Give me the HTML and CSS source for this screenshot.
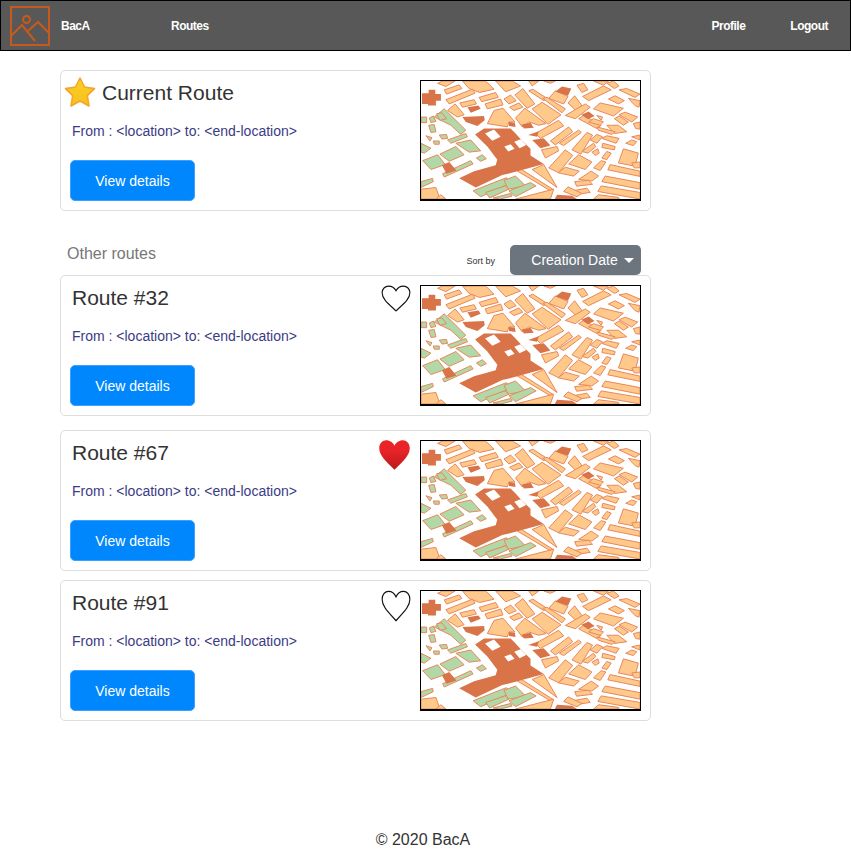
FILE: index.html
```html
<!DOCTYPE html>
<html>
  <head>
    <title>BacA Routes</title>
    <link rel="stylesheet" href="styles.css">
  </head>
  <body>
    <!-- Shared drawings: the map picture and the heart, reused on every card. -->
    <svg class="defs" width="0" height="0">
      <defs>
        <linearGradient id="heart_red" x1="0" y1="0" x2="0" y2="1">
          <stop offset="0.35" stop-color="#e82428"/>
          <stop offset="1" stop-color="#bb181c"/>
        </linearGradient>
        <linearGradient id="star_yellow" x1="0" y1="0" x2="0" y2="1">
          <stop offset="0" stop-color="#fbd023"/>
          <stop offset="1" stop-color="#f6c01f"/>
        </linearGradient>
      </defs>
      <symbol id="heart" viewBox="0 0 32 28" preserveAspectRatio="none">
        <path d="M16 26.8C8 19.5 1.2 14.5 1.2 8C1.2 4 4.3 1.2 8 1.2C11.5 1.2 14.5 3.2 16 6C17.5 3.2 20.5 1.2 24 1.2C27.7 1.2 30.8 4 30.8 8C30.8 14.5 24 19.5 16 26.8Z"/>
      </symbol>
      <symbol id="map" viewBox="15 15 660 360" preserveAspectRatio="none">
        <g class="map_tan">
          <polygon points="65,22 80,15 118,15 90,32"/>
          <polygon points="85,42 130,27 138,38 92,55"/>
          <polygon points="140,15 210,15 235,40 192,50 160,38"/>
          <polygon points="240,15 290,15 315,30 270,48"/>
          <polygon points="340,15 370,15 350,30"/>
          <polygon points="385,15 420,15 405,22"/>
          <polygon points="90,72 170,40 178,52 100,85"/>
          <polygon points="190,65 240,50 248,65 198,78"/>
          <polygon points="208,85 255,70 262,88 215,100"/>
          <polygon points="132,82 175,72 182,85 140,95"/>
          <polygon points="95,105 118,85 145,118 125,125"/>
          <polygon points="265,70 285,58 302,75 280,85"/>
          <polygon points="282,95 310,82 322,95 295,105"/>
          <polygon points="298,58 322,38 358,85 335,98"/>
          <polygon points="340,45 352,40 395,68 385,75"/>
          <polygon points="382,68 395,65 450,100 440,112"/>
          <polygon points="350,100 380,80 437,118 398,147"/>
          <polygon points="300,128 328,98 392,145 370,150 340,140 320,155"/>
          <polygon points="215,145 235,105 262,98 298,140 280,140 275,155"/>
          <polygon points="360,175 430,135 445,152 375,190"/>
          <polygon points="405,198 460,155 472,170 420,210"/>
          <polygon points="432,205 490,165 498,172 445,212"/>
          <polygon points="470,225 515,172 532,180 497,238"/>
          <polygon points="378,225 425,215 430,228 390,250"/>
          <polygon points="400,280 450,225 472,242 430,295"/>
          <polygon points="460,268 490,240 530,262 510,285"/>
          <polygon points="428,295 450,278 492,290 475,305"/>
          <polygon points="500,230 535,205 542,215 518,235"/>
          <polygon points="525,195 545,178 562,185 545,205"/>
          <polygon points="560,190 575,182 612,190 603,205"/>
          <polygon points="530,232 548,222 552,235 540,242"/>
          <polygon points="563,205 600,215 598,225 560,218"/>
          <polygon points="560,250 575,230 588,235 575,255"/>
          <polygon points="535,280 558,258 572,262 555,288"/>
          <polygon points="490,315 528,290 550,305 530,320"/>
          <polygon points="610,265 625,222 670,235 660,275"/>
          <polygon points="632,205 650,195 665,200 655,212"/>
          <polygon points="650,185 675,180 675,195"/>
          <polygon points="650,265 675,262 675,280 658,280"/>
          <polygon points="585,270 675,290 675,306 578,286"/>
          <polygon points="570,305 675,325 675,345 560,322"/>
          <polygon points="558,335 675,355 675,375 548,352"/>
          <polygon points="478,322 520,318 532,330 484,336"/>
          <polygon points="472,350 515,342 525,355 478,362"/>
          <polygon points="445,352 458,338 500,358 485,368"/>
          <polygon points="535,375 550,362 610,370 612,375"/>
          <polygon points="485,28 505,22 518,42 500,50"/>
          <polygon points="502,62 565,30 588,42 520,75"/>
          <polygon points="535,15 580,15 565,28"/>
          <polygon points="575,22 595,15 612,30 598,38"/>
          <polygon points="612,42 635,38 675,55 660,65"/>
          <polygon points="580,70 600,60 628,75 610,85"/>
          <polygon points="640,68 675,75 672,95 660,90"/>
          <polygon points="458,82 478,60 500,90 482,105"/>
          <polygon points="400,68 420,45 458,62 445,85"/>
          <polygon points="450,120 510,85 525,95 480,130"/>
          <polygon points="490,130 505,120 558,150 545,160"/>
          <polygon points="535,100 555,82 625,98 595,122"/>
          <polygon points="612,118 630,110 668,125 650,140"/>
          <polygon points="598,130 612,122 640,140 625,150"/>
          <polygon points="545,120 562,125 558,135"/>
          <polygon points="575,150 610,150 635,170 598,175"/>
          <polygon points="520,140 535,130 565,140 555,150"/>
          <polygon points="545,155 600,170 590,178 550,165"/>
          <polygon points="655,145 675,140 675,162 662,160"/>
          <polygon points="350,285 385,270 425,340"/>
          <polygon points="298,285 310,280 412,345 405,350"/>
          <polygon points="300,375 415,345 405,375"/>
          <polygon points="15,345 60,340 72,375 15,375"/>
          <polygon points="75,362 90,375 60,375"/>
        </g>
        <g class="map_green">
          <polygon points="72,238 120,215 145,240 100,260"/>
          <polygon points="120,205 165,195 195,228 160,232"/>
          <polygon points="20,258 65,240 88,270 45,285"/>
          <polygon points="182,250 200,240 212,252 195,260"/>
          <polygon points="80,298 165,258 172,268 85,308"/>
          <polygon points="55,125 85,100 150,165 135,178 105,150 85,140"/>
          <polygon points="15,125 32,125 32,142 15,142"/>
          <polygon points="38,150 55,148 60,170 45,172"/>
          <polygon points="15,205 45,220 25,235 15,232"/>
          <polygon points="70,180 92,178 95,190 78,192"/>
          <polygon points="30,182 48,188 42,198"/>
          <polygon points="95,195 150,175 155,185 105,205"/>
          <polygon points="52,198 70,198 70,208 55,208"/>
          <polygon points="40,128 52,122 60,138 45,142"/>
          <polygon points="62,115 78,112 92,130 72,135"/>
          <polygon points="15,322 50,312 52,322 15,340"/>
          <polygon points="172,350 272,310 288,325 195,368"/>
          <polygon points="265,318 300,305 330,335 278,345"/>
          <polygon points="210,355 268,335 280,345 222,372"/>
          <polygon points="280,350 345,325 362,335 300,368"/>
          <polygon points="232,372 285,358 290,366 255,375"/>
        </g>
        <g class="map_dark">
          <polygon points="18,52 38,52 38,42 58,42 58,55 75,55 75,75 60,75 60,90 36,90 36,85 18,85"/>
          <polygon points="155,95 188,90 195,100 165,112"/>
          <polygon points="140,125 205,122 207,135 185,152 150,140"/>
          <polygon points="318,148 345,142 355,158 325,160"/>
          <polygon points="280,140 298,142 300,155 280,152"/>
          <polygon points="338,180 370,168 365,185"/>
          <polygon points="350,195 385,190 405,212 375,220"/>
          <polygon points="420,47 440,32 468,38 458,60"/>
          <polygon points="498,118 520,108 538,122 518,132"/>
          <polygon points="425,362 470,365 485,375 418,375"/>
          <polygon points="78,272 100,262 122,288 92,298"/>
          <path fill-rule="evenodd" d="M178 178L205 160L285 160L300 175L318 195L345 222L345 242L385 268L300 292L260 302L180 340L130 312L175 290L240 272L245 255L215 215ZM208 175L235 163L255 185L230 197ZM266 215L285 208L297 222L278 230ZM296 200L315 193L332 210L312 220Z"/>
        </g>
      </symbol>
    </svg>

    <header class="topbar">
      <svg class="logo" viewBox="0 0 40 40">
        <rect x="1" y="1" width="38" height="38"/>
        <circle cx="16.5" cy="13.5" r="3.5"/>
        <polyline points="1,30 12,19 25,35"/>
        <polyline points="18,25 28,16 39,27"/>
      </svg>
      <a class="topbar_link topbar_brand" href="#">BacA</a>
      <a class="topbar_link" href="#">Routes</a>
      <div class="topbar_right">
        <a class="topbar_link" href="#">Profile</a>
        <a class="topbar_link" href="#">Logout</a>
      </div>
    </header>

    <main class="routes">
      <!-- Current route -->
      <section class="route_card">
        <div class="route_info">
          <div class="route_head">
            <svg class="star" viewBox="0 0 32 32">
              <polygon points="16,2 20.5,11 30.5,12.6 23.3,19.6 25,30 16,25 7,30 8.7,19.6 1.5,12.6 11.5,11"/>
            </svg>
            <h2 class="route_title">Current Route</h2>
          </div>
          <p class="route_path">From : &lt;location&gt; to: &lt;end-location&gt;</p>
          <button class="details_button">View details</button>
        </div>
        <svg class="route_map"><use href="#map"/></svg>
      </section>

      <!-- Other routes -->
      <div class="list_head">
        <span class="list_title">Other routes</span>
        <span class="sort_label">Sort by</span>
        <button class="sort_button">Creation Date<span class="caret"></span></button>
      </div>

      <section class="route_card">
        <div class="route_info">
          <div class="route_head">
            <h2 class="route_title">Route #32</h2>
            <svg class="heart heart_small"><use href="#heart"/></svg>
          </div>
          <p class="route_path">From : &lt;location&gt; to: &lt;end-location&gt;</p>
          <button class="details_button">View details</button>
        </div>
        <svg class="route_map"><use href="#map"/></svg>
      </section>

      <section class="route_card route_card_wide_gap">
        <div class="route_info">
          <div class="route_head">
            <h2 class="route_title">Route #67</h2>
            <svg class="heart heart_filled"><use href="#heart"/></svg>
          </div>
          <p class="route_path">From : &lt;location&gt; to: &lt;end-location&gt;</p>
          <button class="details_button">View details</button>
        </div>
        <svg class="route_map"><use href="#map"/></svg>
      </section>

      <section class="route_card route_card_gap">
        <div class="route_info">
          <div class="route_head">
            <h2 class="route_title">Route #91</h2>
            <svg class="heart"><use href="#heart"/></svg>
          </div>
          <p class="route_path">From : &lt;location&gt; to: &lt;end-location&gt;</p>
          <button class="details_button">View details</button>
        </div>
        <svg class="route_map"><use href="#map"/></svg>
      </section>
    </main>

    <footer class="page_footer">&copy; 2020 BacA</footer>
  </body>
</html>
```

FILE: styles.css
```css
body
  {
  margin: 0;
  font-family: "Liberation Sans", Arial, sans-serif;
  color: #333333;
  background: #ffffff;
  }

.defs
  {
  display: block;
  height: 0;
  }

/* Top bar */
.topbar
  {
  display: flex;
  align-items: center;
  height: 49px;
  padding: 0 22px 0 9px;
  border: 1px solid #000000;
  background: #585858;
  }

.logo
  {
  width: 40px;
  height: 40px;
  margin-right: 11px;
  fill: none;
  stroke: #c65a1e;
  stroke-width: 2;
  }

.topbar_link
  {
  color: #ffffff;
  font-size: 12px;
  font-weight: bold;
  letter-spacing: -0.5px;
  text-decoration: none;
  }

.topbar_brand
  {
  width: 110px;
  }

.topbar_right
  {
  display: flex;
  gap: 45px;
  margin-left: auto;
  }

/* Route cards */
.routes
  {
  width: 591px;
  margin: 19px 0 0 60px;
  }

.route_card
  {
  display: flex;
  box-sizing: border-box;
  height: 141px;
  padding: 9px 9px;
  border: 1px solid #dddddd;
  border-radius: 5px;
  }

.route_card_wide_gap
  {
  margin-top: 14px;
  }

.route_card_gap
  {
  margin-top: 9px;
  }

.route_info
  {
  flex: 1;
  padding-right: 9px;
  }

.route_head
  {
  display: flex;
  justify-content: space-between;
  align-items: flex-start;
  height: 26px;
  }

.route_head .star + .route_title
  {
  margin-right: auto;
  }

.route_title
  {
  margin: 0 0 0 2px;
  font-size: 21px;
  font-weight: normal;
  line-height: 26px;
  color: #333333;
  }

.star
  {
  flex: none;
  width: 32px;
  height: 32px;
  margin: -4px 4px 0 -6px;
  fill: url(#star_yellow);
  stroke: #f5a42c;
  stroke-width: 1.6;
  stroke-linejoin: round;
  }

.heart
  {
  flex: none;
  width: 30px;
  height: 32px;
  fill: #ffffff;
  stroke: #111111;
  stroke-width: 1.2;
  }

.heart_small
  {
  height: 27px;
  }

.heart_filled
  {
  width: 33px;
  height: 32px;
  margin-top: -1px;
  fill: url(#heart_red);
  stroke: none;
  }

.route_path
  {
  margin: 16px 0 20px 2px;
  font-size: 14px;
  line-height: 18px;
  color: #3b3b85;
  }

.details_button
  {
  display: block;
  width: 125px;
  height: 41px;
  padding: 0;
  border: 1px solid #3d9fff;
  border-radius: 5px;
  background: #0087fd;
  color: #ffffff;
  font-family: inherit;
  font-size: 14px;
  }

.route_map
  {
  flex: none;
  box-sizing: border-box;
  width: 221px;
  height: 121px;
  border: solid #000000;
  border-width: 1px 1px 2px 1px;
  }

.map_tan polygon
  {
  fill: #fec98a;
  stroke: #e8875a;
  stroke-width: 3;
  }

.map_green polygon
  {
  fill: #b2d8a8;
  stroke: #e8875a;
  stroke-width: 3;
  }

.map_dark polygon, .map_dark path
  {
  fill: #d97348;
  }

/* Heading above the list */
.list_head
  {
  display: flex;
  box-sizing: border-box;
  height: 30px;
  margin: 34px 0 0 0;
  padding: 0 10px 0 7px;
  }

.list_title
  {
  padding-top: 1px;
  font-size: 16px;
  line-height: 16px;
  color: #777777;
  }

.sort_label
  {
  padding-top: 1px;
  margin: 0 15px 0 auto;
  font-size: 9px;
  line-height: 30px;
  color: #333333;
  }

.sort_button
  {
  width: 131px;
  height: 30px;
  padding: 0 0 0 14px;
  border: 0;
  border-radius: 5px;
  background: #6c757d;
  color: #ffffff;
  font-family: inherit;
  font-size: 14px;
  }

.caret
  {
  display: inline-block;
  margin-left: 6px;
  vertical-align: 2px;
  border-top: 5px solid #ffffff;
  border-left: 5px solid transparent;
  border-right: 5px solid transparent;
  }

.page_footer
  {
  margin-top: 110px;
  padding-right: 5px;
  font-size: 16px;
  line-height: 18px;
  text-align: center;
  color: #333333;
  }
```
